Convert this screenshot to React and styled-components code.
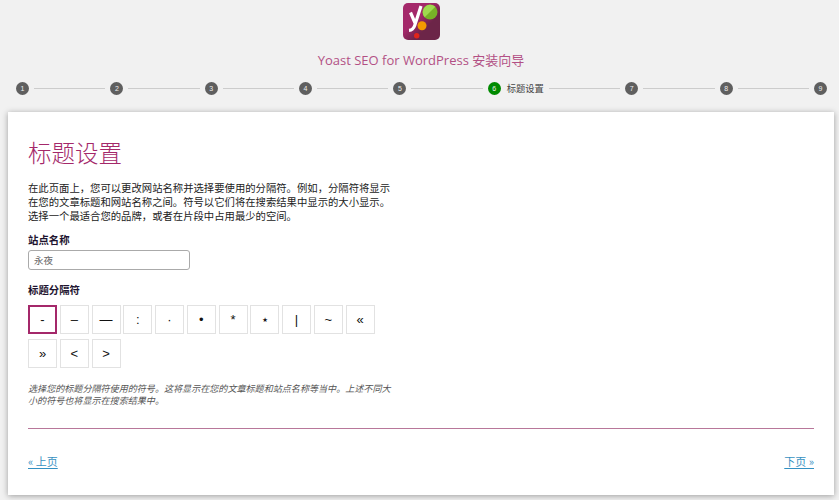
import React from "react";
import styled, { createGlobalStyle } from "styled-components";

const CJK = `"Noto Sans CJK SC", "Liberation Sans", sans-serif`;
const steps = [1, 2, 3, 4, 5, 6, 7, 8, 9];
const separators = ["-", "–", "—", ":", "·", "•", "*", "⋆", "|", "~", "«", "»", "<", ">"];

const Global = createGlobalStyle`
  html, body { margin: 0; padding: 0; background: #f1f1f1; }
  body { width: 839px; height: 500px; overflow: hidden; font-family: ${CJK}; color: #333; }
`;

const Page = styled.div`
  display: flex;
  flex-direction: column;
  height: 500px;
  padding: 3px 5px 5px 8px;
  box-sizing: border-box;
`;
const Header = styled.header`
  display: flex;
  flex-direction: column;
  align-items: center;
`;
const Logo = styled.svg`
  display: block;
  width: 37px;
  height: 37px;
`;
const AppTitle = styled.h1`
  margin: 12px 0 0;
  font: 400 13px/16px "Open Sans", ${CJK};
  letter-spacing: 0;
  color: #a4286a;
  opacity: 0.8;
`;
const Stepper = styled.ol`
  display: flex;
  align-items: center;
  list-style: none;
  margin: 12px 7px 0 8px;
  padding: 0;
  height: 16px;
`;
const Step = styled.li`
  display: flex;
  align-items: center;
  flex: ${(p) => (p.$last ? "0 0 auto" : "1 1 auto")};
  min-width: 0;
`;
const Dot = styled.span`
  flex: none;
  width: 13px;
  height: 13px;
  border-radius: 50%;
  background: ${(p) => (p.$active ? "#008a00" : "#5f5f5f")};
  color: #eee;
  font: 400 7px/13px "Liberation Sans", sans-serif;
  text-align: center;
`;
const StepLabel = styled.span`
  flex: none;
  margin-left: 6px;
  font-size: 9.3px;
  line-height: 14px;
  color: #444;
`;
const Line = styled.span`
  flex: 1;
  height: 1px;
  margin: 0 5px;
  background: #ccc;
`;
const Card = styled.main`
  display: flex;
  flex-direction: column;
  flex: 1;
  margin-top: 16px;
  padding: 25px 20px 0;
  background: #fff;
  box-shadow: 0 1px 6px rgba(0, 0, 0, 0.35);
`;
const Heading = styled.h2`
  margin: 0 0 14px;
  font-size: 23.5px;
  font-weight: 300;
  line-height: 30px;
  color: #a4286a;
`;
const Body = styled.div`
  width: 366px;
`;
const Intro = styled.p`
  margin: 0 0 10px;
  font-size: 10.35px;
  line-height: 14px;
  color: #222;
`;
const Label = styled.label`
  display: block;
  font-size: 10.4px;
  font-weight: 700;
  line-height: 14px;
  color: #1e1430;
`;
const NameInput = styled.input`
  display: block;
  box-sizing: border-box;
  width: 162px;
  height: 20px;
  margin: 3px 0 13px;
  padding: 0 5px;
  border: 1px solid #aaa;
  border-radius: 3px;
  background: #fff;
  font: 400 9.5px ${CJK};
  color: #666;
  outline: none;
`;
const SeparatorGrid = styled.div`
  display: flex;
  flex-wrap: wrap;
  gap: 5.5px 2.75px;
  margin-top: 8px;
`;
const Separator = styled.button`
  box-sizing: border-box;
  width: 29px;
  height: 28.5px;
  padding: 0;
  background: #fff;
  border: ${(p) => (p.$selected ? "2px solid #a4286a" : "1px solid #e2e2e2")};
  font: 400 13px/1 "Liberation Sans", sans-serif;
  color: #111;
`;
const Note = styled.p`
  margin: 14px 0 0;
  font-size: 9.07px;
  font-style: italic;
  line-height: 12px;
  color: #555;
`;
const Rule = styled.hr`
  width: 100%;
  height: 1px;
  margin: 22.5px 0 0;
  border: 0;
  background: #b8779a;
`;
const Nav = styled.nav`
  display: flex;
  justify-content: space-between;
  margin-top: 25px;
`;
const NavLink = styled.a`
  font-size: 11px;
  line-height: 14px;
  color: #0075b3;
  text-decoration: underline;
  text-underline-offset: 2px;
  opacity: 0.8;
`;

function YoastLogo() {
  return (
    <Logo viewBox="0 0 37 37" aria-label="Yoast">
      <defs>
        <linearGradient id="bg" x1="0" y1="0" x2="1" y2="1">
          <stop offset="0.4" stopColor="#a4286a" />
          <stop offset="0.65" stopColor="#6c2548" />
        </linearGradient>
      </defs>
      <rect width="37" height="37" rx="5" fill="url(#bg)" />
      <path d="M7.5 9.5l5 11.5M18 3l-6.3 19.5c-1 3-2.6 4.6-5.7 4.8" fill="none" stroke="#fff" strokeWidth="3.2" />
      <circle cx="27" cy="9" r="7.5" fill="#77b227" />
      <path d="M21.7 14.3a7.5 7.5 0 0 1 10.6-10.6z" fill="#9fda4f" />
      <circle cx="19" cy="22.7" r="4.5" fill="#f49a00" />
      <circle cx="13.7" cy="32.7" r="2.7" fill="#e1251b" />
    </Logo>
  );
}

export default function App() {
  return (
    <>
      <Global />
      <Page>
        <Header>
          <YoastLogo />
          <AppTitle>Yoast SEO for WordPress 安装向导</AppTitle>
        </Header>
        <Stepper>
          {steps.map((n) => {
            const active = n === 6;
            const last = n === steps.length;
            return (
              <Step key={n} $last={last}>
                <Dot $active={active}>{n}</Dot>
                {active && <StepLabel>标题设置</StepLabel>}
                {!last && <Line />}
              </Step>
            );
          })}
        </Stepper>
        <Card>
          <Heading>标题设置</Heading>
          <Body>
            <Intro>
              在此页面上，您可以更改网站名称并选择要使用的分隔符。例如，分隔符将显示
              在您的文章标题和网站名称之间。符号以它们将在搜索结果中显示的大小显示。
              选择一个最适合您的品牌，或者在片段中占用最少的空间。
            </Intro>
            <Label htmlFor="site-name">站点名称</Label>
            <NameInput id="site-name" defaultValue="永夜" />
            <Label>标题分隔符</Label>
            <SeparatorGrid>
              {separators.map((s, i) => (
                <Separator key={s} $selected={i === 0}>
                  {s}
                </Separator>
              ))}
            </SeparatorGrid>
            <Note>
              选择您的标题分隔符使用的符号。这将显示在您的文章标题和站点名称等当中。上述不同大小的符号也将显示在搜索结果中。
            </Note>
          </Body>
          <Rule />
          <Nav>
            <NavLink href="#prev">« 上页</NavLink>
            <NavLink href="#next">下页 »</NavLink>
          </Nav>
        </Card>
      </Page>
    </>
  );
}
